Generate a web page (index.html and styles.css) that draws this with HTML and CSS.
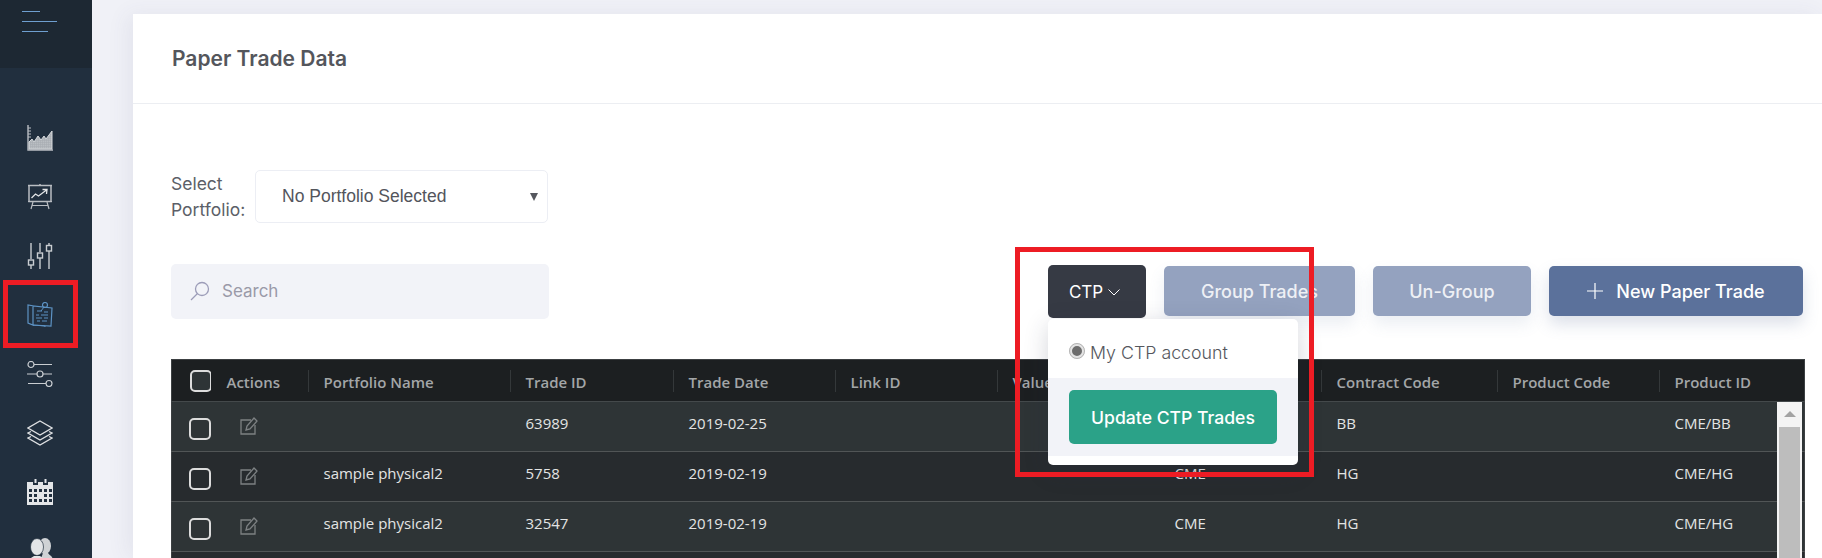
FILE: index.html
```html
<!DOCTYPE html>
<html lang="en">
<head>
    <meta charset="UTF-8">
    <title>Paper Trade Data</title>
    <link rel="stylesheet" href="styles.css">
</head>
<body>
    <aside class="sidebar">
        <div class="sidebarTop">
            <div class="burger"><i class="b1"></i><i class="b2"></i><i class="b3"></i></div>
        </div>
        <nav class="sideNav">
            <svg viewBox="0 0 26 26" fill="none" stroke="#b9bdc2" stroke-width="1">
                <defs><pattern id="dots" width="2" height="2" patternUnits="userSpaceOnUse"><rect width="2" height="2" fill="#6e7780"/><rect width="1" height="1" fill="#c9cdd1"/></pattern></defs>
                <path d="M1 0v25h25" stroke-width="1.400"/>
                <path d="M1 3h3M1 6h3M1 9h3M1 12h3" />
                <path d="M2 24v-7l3-3 2 3 4-6 3 4 3-4 2 3 6-8v18z" fill="url(#dots)" stroke="#d5d8db"/>
            </svg>
            <svg viewBox="0 0 26 26" fill="none" stroke="#b9bdc2" stroke-width="1.200">
                <path d="M13 0v1M1 1.500h24M2 1.500v16h22v-16" stroke-width="1.500"/>
                <path d="M1 17.500h24M6 18l-2 7M20 18l2 7M5 21.500h16"/>
                <path d="M4.500 14l4-4 3 2 8-6M15.500 5.500l4.500 0 -.5 4.500" stroke="#e2e4e6" stroke-width="1.300"/>
            </svg>
            <svg viewBox="0 0 26 26" fill="none" stroke="#c9cdd1" stroke-width="1.400">
                <path d="M4 0v16M4 22v4M13 0v9M13 15v11M22 0v2M22 8v18"/>
                <rect x="1.500" y="17" width="5" height="5"/>
                <rect x="10.500" y="10" width="5" height="5"/>
                <rect x="19.500" y="2.500" width="5" height="5.500"/>
            </svg>
            <svg viewBox="0 0 26 26" fill="none" stroke="#5d93c4" stroke-width="1">
                <path d="M7 4L1 3v18l5 2V4l19 2-1 18-18-1" stroke-width="1.200"/>
                <path d="M6 23l12 1 0 1"/>
                <circle cx="18" cy="3" r="2.500" stroke-width="1.200"/>
                <path d="M17 5l-3 4M10 9h5M17 10h4M9 13h3M14 13h7M9 16h6M17 16h4M10 19h3M15 19h5"/>
            </svg>
            <svg viewBox="0 0 26 26" fill="none" stroke="#c9cdd1" stroke-width="1.200">
                <path d="M7 3.500h18M0 13h10M16 13h9M1 22.500h18" stroke-width="1.200"/>
                <circle cx="4" cy="3.500" r="3"/>
                <circle cx="13" cy="13" r="3"/>
                <circle cx="22" cy="22.500" r="3"/>
            </svg>
            <svg viewBox="0 0 26 26" fill="none" stroke="#dfe1e3" stroke-width="1.300">
                <path d="M13 1l12 7-12 7L1 8z"/>
                <path d="M4 11.500L1 13l12 7 12-7-3-1.500"/>
                <path d="M4 16.500L1 18l12 7 12-7-3-1.500"/>
            </svg>
            <svg viewBox="0 0 26 26">
                <path d="M0 3h26v23H0z" fill="#e3e5e7"/>
                <g fill="#212f3e">
                    <rect x="6" y="0" width="5" height="6"/><rect x="16" y="0" width="5" height="6"/>
                    <rect x="2" y="10" width="3" height="3"/><rect x="7" y="10" width="3" height="3"/><rect x="12" y="10" width="3" height="3"/><rect x="17" y="10" width="3" height="3"/><rect x="22" y="10" width="3" height="3"/>
                    <rect x="2" y="15" width="3" height="3"/><rect x="7" y="15" width="3" height="3"/><rect x="17" y="15" width="3" height="3"/><rect x="22" y="15" width="3" height="3"/>
                    <rect x="2" y="20" width="3" height="3"/><rect x="7" y="20" width="3" height="3"/><rect x="12" y="20" width="3" height="3"/><rect x="17" y="20" width="3" height="3"/><rect x="22" y="20" width="3" height="3"/>
                </g>
                <path d="M7.500 0h2v4h-2zM17.500 0h2v4h-2z" fill="#e3e5e7"/>
            </svg>
            <svg viewBox="0 0 26 26">
                <ellipse cx="18" cy="8" rx="6" ry="8" fill="#cfd2d5"/>
                <path d="M16 15h5c2 3 5 3 5 8v3H12z" fill="#cfd2d5"/>
                <ellipse cx="10" cy="9" rx="6.500" ry="8.500" fill="#e3e5e7" stroke="#212f3e" stroke-width=".7"/>
                <path d="M0 26c0-4 4-6 7-8h6c3 2 7 4 7 8z" fill="#e3e5e7"/>
            </svg>
        </nav>
    </aside>

    <main class="mainArea">
        <section class="card">
            <header class="cardHeader">
                <h1>Paper Trade Data</h1>
            </header>
            <div class="cardBody">
                <div class="portfolioRow">
                    <label class="portfolioLabel">Select Portfolio:</label>
                    <div class="selectBox">
                        <span>No Portfolio Selected</span>
                        <i class="selectArrow"></i>
                    </div>
                </div>

                <div class="toolbar">
                    <div class="searchBox">
                        <svg viewBox="0 0 20 20" fill="none" stroke="#9c9cb8" stroke-width="1.300">
                            <circle cx="12" cy="8" r="6.500"/>
                            <path d="M7.500 12.500L1 19"/>
                        </svg>
                        <input type="text" placeholder="Search">
                    </div>
                    <div class="actions">
                        <div class="ctpWrap">
                            <button class="btn btnDark">CTP
                                <svg viewBox="0 0 12 7" fill="none" stroke="#fff"><path d="M.5 .5L6 6l5.500-5.500"/></svg>
                            </button>
                            <div class="ctpMenu">
                                <label class="ctpOption"><i class="radio"></i>My CTP account</label>
                                <div class="ctpFooter">
                                    <button class="btn btnGreen">Update CTP Trades</button>
                                </div>
                            </div>
                        </div>
                        <button class="btn btnMuted btnGroup">Group Trades</button>
                        <button class="btn btnMuted btnUngroup">Un-Group</button>
                        <button class="btn btnBlue">
                            <svg viewBox="0 0 16 16" fill="none" stroke="#fff" stroke-width="1.200"><path d="M8 0v16M0 8h16"/></svg>
                            New Paper Trade
                        </button>
                    </div>
                </div>

                <div class="tableWrap">
                    <table class="trades">
                        <colgroup>
                            <col class="colCheck"><col class="colActions"><col class="colName"><col class="colId"><col class="colStd">
                            <col class="colStd"><col class="colStd"><col class="colStd"><col class="colWide"><col class="colStd"><col class="colLast">
                        </colgroup>
                        <thead>
                            <tr>
                                <th class="noSep"><i class="check checkHead"></i></th>
                                <th>Actions</th>
                                <th>Portfolio Name</th>
                                <th>Trade ID</th>
                                <th>Trade Date</th>
                                <th>Link ID</th>
                                <th>Value Date</th>
                                <th>Exchange</th>
                                <th>Contract Code</th>
                                <th>Product Code</th>
                                <th>Product ID</th>
                            </tr>
                        </thead>
                        <tbody>
                            <tr>
                                <td><i class="check"></i></td>
                                <td><svg class="editIcon" viewBox="0 0 18 18" fill="none" stroke="#7d8183" stroke-width="1.300"><path d="M11 3H1v14h14V8"/><path d="M7 9l-1 4 4-1 7-8-3-3z"/></svg></td>
                                <td></td><td>63989</td><td>2019-02-25</td><td></td><td></td><td>CME</td><td>BB</td><td></td><td>CME/BB</td>
                            </tr>
                            <tr>
                                <td><i class="check"></i></td>
                                <td><svg class="editIcon" viewBox="0 0 18 18" fill="none" stroke="#7d8183" stroke-width="1.300"><path d="M11 3H1v14h14V8"/><path d="M7 9l-1 4 4-1 7-8-3-3z"/></svg></td>
                                <td>sample physical2</td><td>5758</td><td>2019-02-19</td><td></td><td></td><td>CME</td><td>HG</td><td></td><td>CME/HG</td>
                            </tr>
                            <tr>
                                <td><i class="check"></i></td>
                                <td><svg class="editIcon" viewBox="0 0 18 18" fill="none" stroke="#7d8183" stroke-width="1.300"><path d="M11 3H1v14h14V8"/><path d="M7 9l-1 4 4-1 7-8-3-3z"/></svg></td>
                                <td>sample physical2</td><td>32547</td><td>2019-02-19</td><td></td><td></td><td>CME</td><td>HG</td><td></td><td>CME/HG</td>
                            </tr>
                            <tr>
                                <td colspan="11"></td>
                            </tr>
                        </tbody>
                    </table>
                    <div class="scrollBar">
                        <i class="scrollUp"></i>
                        <i class="scrollThumb"></i>
                    </div>
                </div>
            </div>
        </section>
    </main>

    <div class="markSide"></div>
    <div class="markMenu"></div>
</body>
</html>
```

FILE: styles.css
```css
html, body {
    height: 100%;
    overflow: hidden;
}
body {
    margin: 0;
    display: flex;
    background-color: #f0f1f7;
    font-family: "Inter", "Liberation Sans", sans-serif;
    color: #505259;
}
.sidebar {
    width: 92px;
    flex: none;
    background-color: #212f3e;
}
.sidebarTop {
    height: 68px;
    background-color: #1d2833;
    padding: 11px 0 0 22px;
    box-sizing: border-box;
}
.burger i {
    display: block;
    height: 1px;
    background-color: #6f9fd0;
    margin-bottom: 9px;
}
.burger .b1 { width: 18px; }
.burger .b2 { width: 35px; }
.burger .b3 { width: 26px; }
.sideNav {
    display: flex;
    flex-direction: column;
    gap: 33px;
    padding: 57px 0 0 27px;
}
.sideNav svg {
    width: 26px;
    height: 26px;
    flex: none;
}
.mainArea {
    flex: 1;
    min-width: 0;
    padding: 14px 0 0 41px;
}
.card {
    height: 100%;
    background-color: #fff;
    box-shadow: -6px 0 20px rgba(70, 75, 110, 0.07);
}
.cardHeader {
    height: 90px;
    box-sizing: border-box;
    border-bottom: 1px solid #eceef2;
    padding: 32px 39px 0;
}
.cardHeader h1 {
    margin: 0;
    font-size: 21px;
    line-height: 26px;
    font-weight: 600;
    color: #54565c;
}
.cardBody {
    padding: 66px 19px 0 38px;
}
.portfolioRow {
    display: flex;
    align-items: center;
    height: 53px;
}
.portfolioLabel {
    width: 84px;
    font-size: 17.500px;
    line-height: 26px;
    box-sizing: border-box;
    color: #5c5f68;
}
.selectBox {
    width: 293px;
    height: 53px;
    box-sizing: border-box;
    border: 1px solid #eceef4;
    border-radius: 5px;
    display: flex;
    align-items: center;
    justify-content: space-between;
    padding: 0 9px 0 26px;
    font-family: "Liberation Sans", sans-serif;
    font-size: 17.500px;
    color: #53555c;
}
.selectArrow {
    width: 0;
    height: 0;
    border-left: 4px solid transparent;
    border-right: 4px solid transparent;
    border-top: 8px solid #55575e;
}
.toolbar {
    display: flex;
    align-items: flex-start;
    justify-content: space-between;
    margin-top: 41px;
}
.searchBox {
    width: 378px;
    height: 55px;
    box-sizing: border-box;
    background-color: #f2f3f8;
    border-radius: 5px;
    display: flex;
    align-items: center;
    gap: 12px;
    padding: 0 19px 2px;
}
.searchBox svg {
    width: 20px;
    height: 20px;
    flex: none;
}
.searchBox input {
    flex: 1;
    min-width: 0;
    border: none;
    outline: none;
    padding: 0;
    background: transparent;
    font-family: "Inter", "Liberation Sans", sans-serif;
    font-size: 17px;
    color: #9a9aa8;
}
.searchBox input::placeholder {
    color: #9a9aa8;
    opacity: 1;
}
.actions {
    display: flex;
    align-items: flex-start;
    gap: 18px;
    padding-top: 2px;
}
.btn {
    height: 50px;
    border: none;
    border-radius: 5px;
    color: #fff;
    font-family: "Inter", "Liberation Sans", sans-serif;
    font-size: 18px;
    font-weight: 500;
    cursor: pointer;
    display: flex;
    align-items: center;
    justify-content: center;
    padding: 0;
}
.ctpWrap {
    position: relative;
    margin-top: -1px;
}
.btnDark {
    width: 98px;
    height: 53px;
    background-color: #363a44;
    font-size: 17px;
    font-weight: 400;
    gap: 5px;
    padding-right: 5px;
}
.btnDark svg {
    width: 12px;
    height: 7px;
    margin-top: 2px;
}
.btnMuted {
    background-color: #94a2bf;
    color: #eef0f5;
    box-shadow: 0 8px 16px rgba(94, 113, 155, 0.12);
}
.btnGroup { width: 191px; }
.btnUngroup { width: 158px; }
.btnBlue {
    width: 254px;
    gap: 13px;
    background-color: #5b719b;
    box-shadow: 0 8px 16px rgba(94, 113, 155, 0.22);
}
.btnBlue svg {
    width: 16px;
    height: 16px;
}
.ctpMenu {
    position: absolute;
    top: 54px;
    left: 0;
    width: 250px;
    height: 146px;
    background-color: #fff;
    border-radius: 5px;
    box-shadow: 0 6px 24px rgba(40, 45, 70, 0.2);
    z-index: 5;
}
.ctpOption {
    display: flex;
    align-items: center;
    gap: 5px;
    height: 59px;
    padding: 8px 0 0 21px;
    box-sizing: border-box;
    font-size: 17.800px;
    font-weight: 300;
    color: #55575d;
}
.radio {
    width: 16px;
    height: 16px;
    box-sizing: border-box;
    flex: none;
    margin-top: -4px;
    border-radius: 50%;
    background-color: #6d6d6d;
    border: 3px solid #e4e4e4;
    outline: 1px solid #b5b5b5;
    outline-offset: -1px;
}
.ctpFooter {
    height: 78px;
    box-sizing: border-box;
    padding: 12px 21px 0;
    background-color: #f2f3f8;
}
.btnGreen {
    width: 208px;
    height: 54px;
    font-size: 17.600px;
    background-color: #2ba288;
}
.tableWrap {
    position: relative;
    margin-top: 40px;
}
.trades {
    width: 1632px;
    table-layout: fixed;
    border-collapse: collapse;
    font-family: "Open Sans", "Noto Sans", sans-serif;
    font-size: 15px;
    background-color: #2e3436;
    border: 1px solid #3c4042;
}
.colCheck { width: 39px; }
.colActions { width: 97px; }
.colName { width: 202px; }
.colId { width: 163px; }
.colStd { width: 162px; }
.colWide { width: 176px; }
.colLast { width: 146px; }
.trades th {
    height: 42px;
    padding: 2px 0 0 16px;
    box-sizing: border-box;
    background-color: #1c1f21;
    color: #a3a6a8;
    font-weight: 600;
    text-align: left;
    position: relative;
    border-bottom: 1px solid #44494b;
}
.trades th.noSep { padding: 0 0 0 18px; }
.trades th + th + th::before {
    content: "";
    position: absolute;
    left: 0;
    top: 10px;
    height: 22px;
    width: 1px;
    background-color: #34383a;
}
.trades td {
    height: 50px;
    padding: 11px 0 0 16px;
    box-sizing: border-box;
    vertical-align: top;
    line-height: 20px;
    color: #e3e4e4;
    border-bottom: 1px solid #515556;
    white-space: nowrap;
}
.trades tbody tr:nth-child(even) td {
    background-color: #272b2e;
}
.check {
    display: block;
    width: 22px;
    height: 22px;
    box-sizing: border-box;
    border: 2px solid #dcdcdc;
    border-radius: 5px;
    margin: 5px 0 0 1px;
}
.checkHead {
    background-color: #2e3436;
    margin: 0;
}
.editIcon {
    display: block;
    width: 18px;
    height: 18px;
    margin: 4px 0 0 13px;
}
.scrollBar {
    position: absolute;
    top: 43px;
    left: 1606px;
    width: 25px;
    height: 200px;
    background-color: #f4f4f4;
}
.scrollUp {
    position: absolute;
    top: 9px;
    left: 7px;
    width: 0;
    height: 0;
    border-left: 6px solid transparent;
    border-right: 6px solid transparent;
    border-bottom: 6px solid #a3a3a3;
}
.scrollThumb {
    position: absolute;
    top: 25px;
    left: 2px;
    width: 21px;
    height: 175px;
    background-color: #bdbdbd;
}
.markSide, .markMenu {
    position: absolute;
    box-sizing: border-box;
    border: 5px solid #ed1c24;
    z-index: 10;
}
.markSide {
    left: 3px;
    top: 280px;
    width: 75px;
    height: 68px;
}
.markMenu {
    left: 1015px;
    top: 247px;
    width: 299px;
    height: 230px;
}
```
